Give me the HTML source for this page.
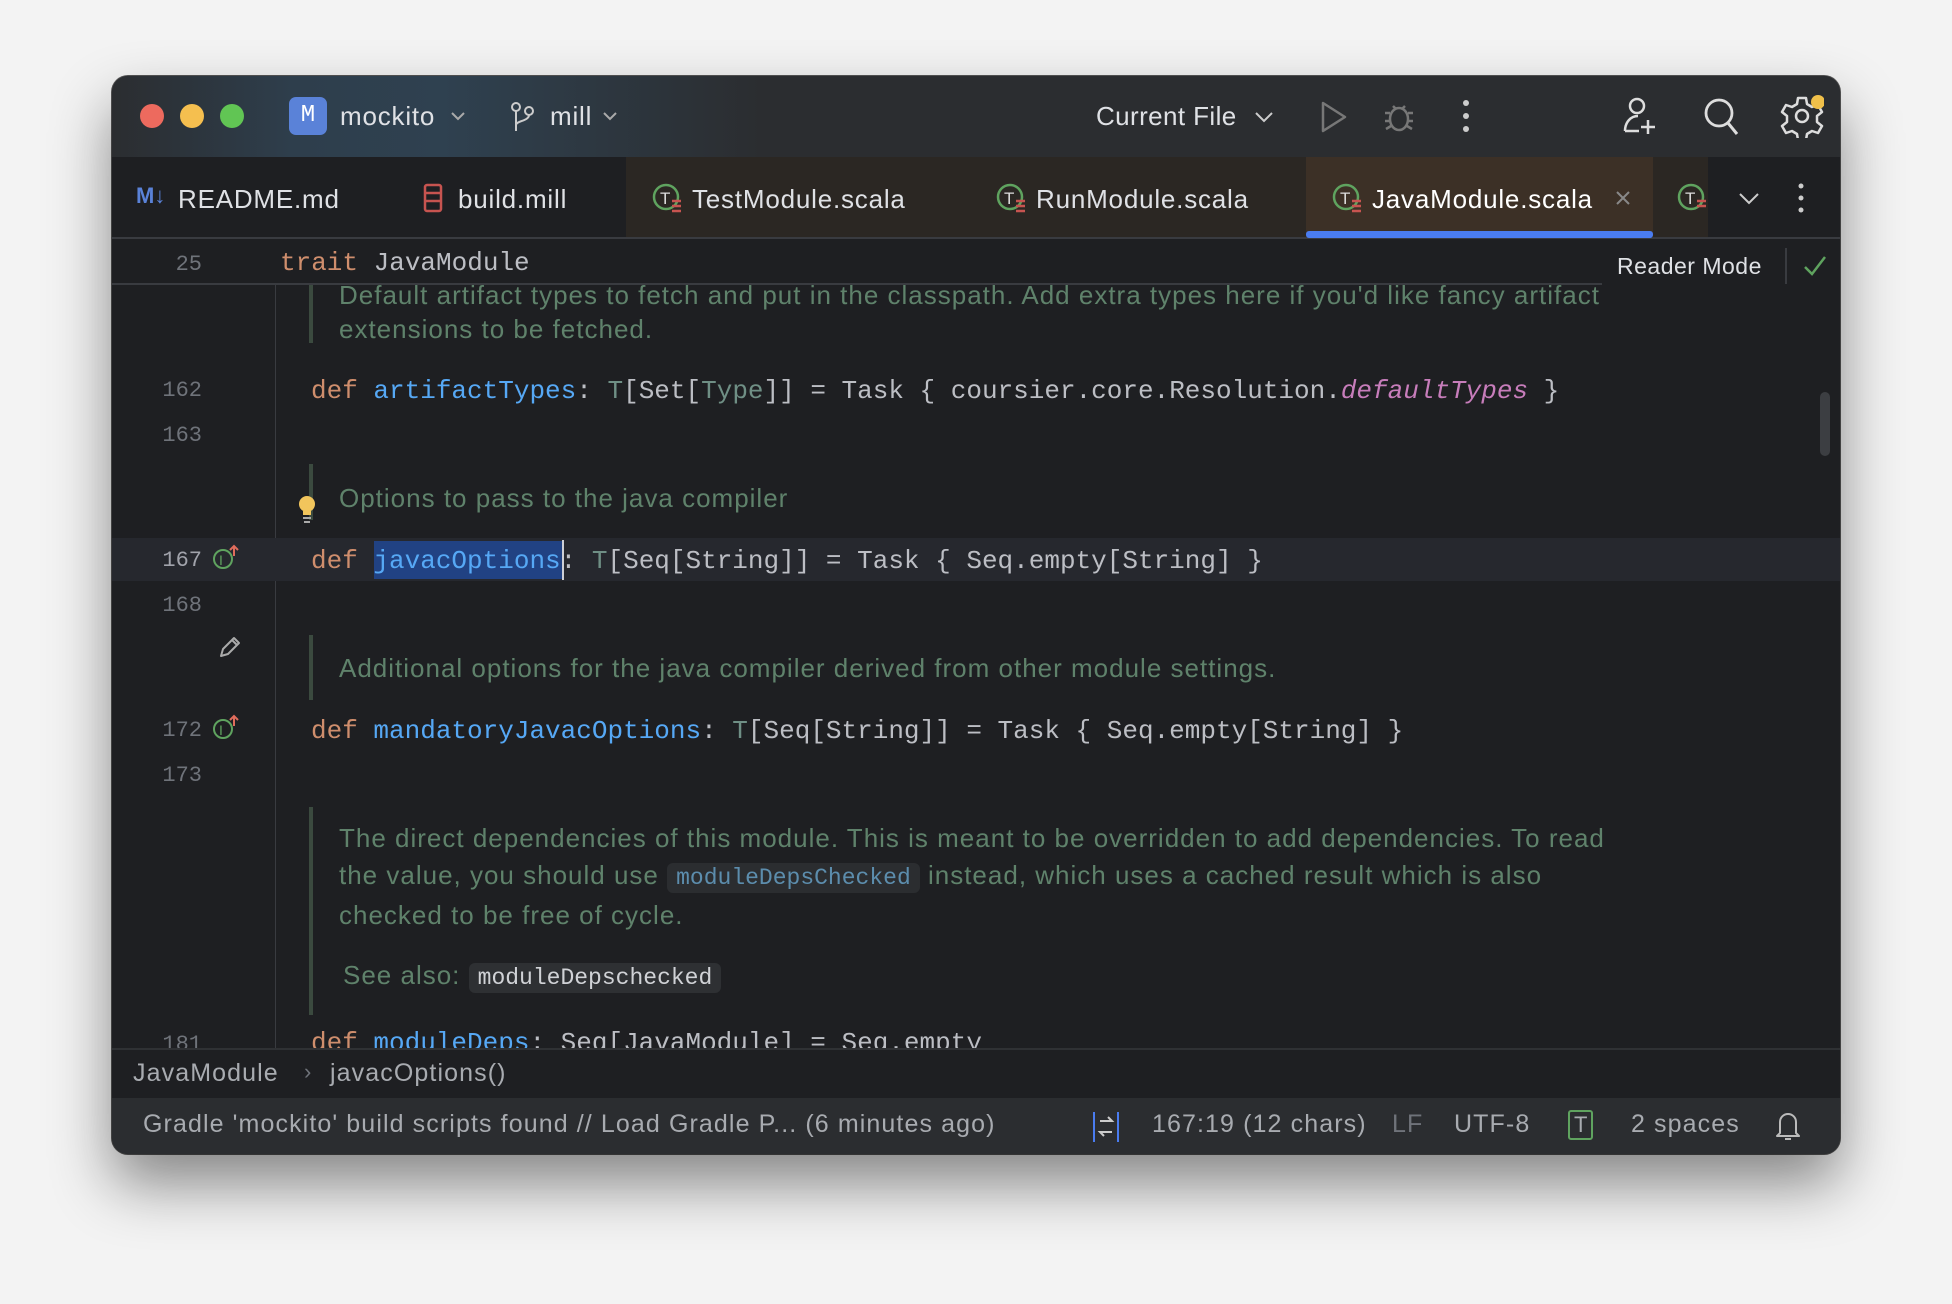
<!DOCTYPE html>
<html><head><meta charset="utf-8"><style>
*{margin:0;padding:0;box-sizing:border-box}
body{width:1952px;height:1304px;background:#f3f3f3;position:relative;overflow:hidden;font-family:"Liberation Sans",sans-serif}
.win{position:absolute;left:112px;top:76px;width:1728px;height:1078px;border-radius:16px;background:#1e1f22;overflow:hidden;box-shadow:0 30px 60px rgba(0,0,0,.45),0 0 0 1px #555;}
.a{position:absolute;white-space:pre}
.title{position:absolute;left:0;top:0;width:1728px;height:81px;background:linear-gradient(90deg,#2b2d30 0px,#2e3e4c 180px,#2f4150 330px,#2b2d30 650px,#2b2d30)}
.ui{color:#dfe1e5;font-size:26px;letter-spacing:0.8px}
.tabs{position:absolute;left:0;top:81px;width:1728px;height:82px;background:#1e1f22;border-bottom:2px solid #393b40}
.mono{font-family:"Liberation Mono",monospace;font-size:26px;color:#bcbec4}
.doc{font-size:26px;letter-spacing:1px;color:#5f826b}
.st{font-size:25px;letter-spacing:1.1px;color:#a8abb0}
.ln{font-family:"Liberation Mono",monospace;font-size:22px;color:#6f737a;text-align:right;width:60px}
.kw{color:#cf8e6d}.fn{color:#56a8f5}.ty{color:#6f8f85}.it{color:#c77dbb;font-style:italic}
.bar{position:absolute;left:197px;width:4px;background:#3b4a3f}
</style></head><body>
<div class="win">
 <div class="title">
  <div class="a" style="left:28px;top:28px;width:24px;height:24px;border-radius:50%;background:#ed6a5e"></div>
  <div class="a" style="left:68px;top:28px;width:24px;height:24px;border-radius:50%;background:#f5bf4f"></div>
  <div class="a" style="left:108px;top:28px;width:24px;height:24px;border-radius:50%;background:#61c554"></div>
  <div class="a" style="left:177px;top:21px;width:38px;height:38px;border-radius:7px;background:#5a82d8;color:#fff;font-size:24px;text-align:center;line-height:38px;font-family:'Liberation Mono',monospace">M</div>
  <div class="a ui" style="left:228px;top:25px">mockito</div>
  <svg class="a" style="left:338px;top:34px" width="16" height="12"><path d="M2 3l6 6 6-6" stroke="#aaa" stroke-width="2" fill="none"/></svg>
  <svg class="a" style="left:397px;top:25px" width="28" height="32"><circle cx="7" cy="6" r="4" stroke="#ccc" stroke-width="2" fill="none"/><circle cx="20" cy="10" r="4" stroke="#ccc" stroke-width="2" fill="none"/><path d="M7 10v20M20 14c0 6-13 6-13 10" stroke="#ccc" stroke-width="2" fill="none"/></svg>
  <div class="a ui" style="left:438px;top:25px">mill</div>
  <svg class="a" style="left:490px;top:34px" width="16" height="12"><path d="M2 3l6 6 6-6" stroke="#aaa" stroke-width="2" fill="none"/></svg>
  <div class="a ui" style="left:984px;top:25px;letter-spacing:0.4px">Current File</div>
  <svg class="a" style="left:1142px;top:34px" width="20" height="14"><path d="M2 3l8 8 8-8" stroke="#ccc" stroke-width="2" fill="none"/></svg>
  <svg class="a" style="left:1206px;top:24px" width="30" height="34"><path d="M5 3l22 14-22 14z" stroke="#777" stroke-width="2.5" fill="none" stroke-linejoin="round"/></svg>
  <svg class="a" style="left:1270px;top:24px" width="34" height="34"><ellipse cx="17" cy="19" rx="9" ry="11" stroke="#777" stroke-width="2.5" fill="none"/><path d="M3 13h5M26 13h5M3 21h5M26 21h5M4 29l5-3M30 29l-5-3M11 6l3 3M23 6l-3 3" stroke="#777" stroke-width="2.5"/></svg>
  <svg class="a" style="left:1350px;top:22px" width="8" height="36"><circle cx="4" cy="5" r="3" fill="#ccc"/><circle cx="4" cy="18" r="3" fill="#ccc"/><circle cx="4" cy="31" r="3" fill="#ccc"/></svg>
  <svg class="a" style="left:1510px;top:20px" width="40" height="42"><circle cx="15" cy="10" r="7" stroke="#ddd" stroke-width="2.5" fill="none"/><path d="M3 35c0-9 6-15 13-15M26 24v14M19 31h14M3 35h14" stroke="#ddd" stroke-width="2.5" fill="none"/></svg>
  <svg class="a" style="left:1590px;top:20px" width="40" height="42"><circle cx="17" cy="17" r="13" stroke="#ddd" stroke-width="2.8" fill="none"/><path d="M26 27l9 11" stroke="#ddd" stroke-width="3"/></svg>
  <svg class="a" style="left:1668px;top:18px" width="44" height="44"><path d="M18 4h8l1 6 5 3 6-2 4 7-5 4v6l5 4-4 7-6-2-5 3-1 6h-8l-1-6-5-3-6 2-4-7 5-4v-6l-5-4 4-7 6 2 5-3z" stroke="#ddd" stroke-width="2.5" fill="none" stroke-linejoin="round"/><circle cx="22" cy="22" r="6" stroke="#ddd" stroke-width="2.5" fill="none"/><circle cx="38" cy="8" r="7" fill="#f0c04a"/></svg>
 </div>
 <div class="tabs">
  <div class="a" style="left:514px;top:0;width:342px;height:80px;background:#2b2723"></div>
  <div class="a" style="left:856px;top:0;width:338px;height:80px;background:#2b2723"></div>
  <div class="a" style="left:1194px;top:0;width:347px;height:80px;background:#3c3026"></div>
  <div class="a" style="left:1194px;top:74px;width:347px;height:7px;background:#4a7cf0;border-radius:3px"></div>
  <div class="a" style="left:1541px;top:0;width:55px;height:80px;background:#2b2723"></div>
  <div class="a" style="left:24px;top:26px;color:#5a82d8;font-weight:bold;font-size:22px">M↓</div>
  <div class="a ui" style="left:66px;top:27px">README.md</div>
  <svg class="a" style="left:310px;top:26px" width="22" height="30"><rect x="3" y="2" width="16" height="26" rx="2" stroke="#c75450" stroke-width="2.5" fill="none"/><path d="M3 10h16M3 18h16" stroke="#c75450" stroke-width="2.5"/></svg>
  <div class="a ui" style="left:346px;top:27px">build.mill</div>
  <svg class="a" style="left:540px;top:25px" width="34" height="34"><circle cx="14" cy="15" r="12" stroke="#5fa35f" stroke-width="2.5" fill="none"/><text x="8" y="22" fill="#ddd" font-size="17" font-family="Liberation Sans">T</text><path d="M20 19h9M20 24h9M20 29h9" stroke="#c75450" stroke-width="2.5"/></svg>
  <div class="a ui" style="left:580px;top:27px">TestModule.scala</div>
  <svg class="a" style="left:884px;top:25px" width="34" height="34"><circle cx="14" cy="15" r="12" stroke="#5fa35f" stroke-width="2.5" fill="none"/><text x="8" y="22" fill="#ddd" font-size="17" font-family="Liberation Sans">T</text><path d="M20 19h9M20 24h9M20 29h9" stroke="#c75450" stroke-width="2.5"/></svg>
  <div class="a ui" style="left:924px;top:27px">RunModule.scala</div>
  <svg class="a" style="left:1220px;top:25px" width="34" height="34"><circle cx="14" cy="15" r="12" stroke="#5fa35f" stroke-width="2.5" fill="none"/><text x="8" y="22" fill="#ddd" font-size="17" font-family="Liberation Sans">T</text><path d="M20 19h9M20 24h9M20 29h9" stroke="#c75450" stroke-width="2.5"/></svg>
  <div class="a ui" style="left:1260px;top:27px;color:#fff">JavaModule.scala</div>
  <svg class="a" style="left:1502px;top:32px" width="18" height="18"><path d="M3 3l12 12M15 3L3 15" stroke="#888" stroke-width="2"/></svg>
  <svg class="a" style="left:1565px;top:25px" width="30" height="34"><circle cx="14" cy="15" r="12" stroke="#5fa35f" stroke-width="2.5" fill="none"/><text x="8" y="22" fill="#ddd" font-size="17" font-family="Liberation Sans">T</text><path d="M20 19h9M20 24h9" stroke="#c75450" stroke-width="2.5"/></svg>
  <svg class="a" style="left:1626px;top:34px" width="22" height="14"><path d="M2 3l9 9 9-9" stroke="#ccc" stroke-width="2" fill="none"/></svg>
  <svg class="a" style="left:1685px;top:24px" width="8" height="34"><circle cx="4" cy="5" r="2.5" fill="#ccc"/><circle cx="4" cy="17" r="2.5" fill="#ccc"/><circle cx="4" cy="29" r="2.5" fill="#ccc"/></svg>
 </div>
 <!-- editor -->
 <div class="a" style="left:163px;top:209px;width:1px;height:763px;background:#393b40"></div>
 <div class="bar" style="top:209px;height:58px"></div>
 <div class="a doc" style="left:227px;top:204px">Default artifact types to fetch and put in the classpath. Add extra types here if you'd like fancy artifact</div>
 <div class="a doc" style="left:227px;top:238px">extensions to be fetched.</div>
 <div class="a ln" style="left:30px;top:302px">162</div>
 <div class="a mono" style="left:199px;top:300px"><span class="kw">def</span> <span class="fn">artifactTypes</span>: <span class="ty">T</span>[Set[<span class="ty">Type</span>]] = Task { coursier.core.Resolution.<span class="it">defaultTypes</span> }</div>
 <div class="a ln" style="left:30px;top:347px">163</div>
 <div class="bar" style="top:388px;height:56px"></div>
 <div class="a doc" style="left:227px;top:407px">Options to pass to the java compiler</div>
 <svg class="a" style="left:184px;top:418px" width="22" height="30"><circle cx="11" cy="10" r="8" fill="#f2c55c"/><rect x="7" y="17" width="8" height="4" fill="#f2c55c"/><path d="M7 24h8M8 28h6" stroke="#aaa" stroke-width="2"/></svg>
 <div class="a" style="left:0;top:462px;width:1728px;height:43px;background:#26282e"></div>
 <div class="a ln" style="left:30px;top:472px;color:#a1a3ab">167</div>
 <svg class="a" style="left:100px;top:468px" width="28" height="28"><circle cx="11" cy="15" r="9" stroke="#5fa35f" stroke-width="2" fill="none"/><text x="7" y="21" fill="#5fa35f" font-size="14" font-family="Liberation Sans">I</text><path d="M22 12V2M18 6l4-4 4 4" stroke="#e06c5c" stroke-width="2" fill="none"/></svg>
 <div class="a" style="left:262px;top:465px;width:188px;height:38px;background:#214283"></div>
 <div class="a" style="left:450px;top:464px;width:2px;height:40px;background:#ced0d6"></div>
 <div class="a mono" style="left:199px;top:470px"><span class="kw">def</span> <span class="fn">javacOptions</span>: <span class="ty">T</span>[Seq[String]] = Task { Seq.empty[String] }</div>
 <div class="a ln" style="left:30px;top:517px">168</div>
 <svg class="a" style="left:105px;top:558px" width="26" height="26"><path d="M4 22l2-7L17 4l5 5-11 11z M15 6l5 5" stroke="#aaa" stroke-width="2" fill="none" stroke-linejoin="round"/></svg>
 <div class="bar" style="top:559px;height:65px"></div>
 <div class="a doc" style="left:227px;top:577px">Additional options for the java compiler derived from other module settings.</div>
 <div class="a ln" style="left:30px;top:642px">172</div>
 <svg class="a" style="left:100px;top:638px" width="28" height="28"><circle cx="11" cy="15" r="9" stroke="#5fa35f" stroke-width="2" fill="none"/><text x="7" y="21" fill="#5fa35f" font-size="14" font-family="Liberation Sans">I</text><path d="M22 12V2M18 6l4-4 4 4" stroke="#e06c5c" stroke-width="2" fill="none"/></svg>
 <div class="a mono" style="left:199px;top:640px"><span class="kw">def</span> <span class="fn">mandatoryJavacOptions</span>: <span class="ty">T</span>[Seq[String]] = Task { Seq.empty[String] }</div>
 <div class="a ln" style="left:30px;top:687px">173</div>
 <div class="bar" style="top:731px;height:208px"></div>
 <div class="a doc" style="left:227px;top:747px">The direct dependencies of this module. This is meant to be overridden to add dependencies. To read</div>
 <div class="a doc" style="left:227px;top:784px">the value, you should use <span style="display:inline-block;background:#2b2d30;border-radius:6px;padding:2px 9px;font-family:'Liberation Mono',monospace;font-size:23px;letter-spacing:0;color:#5c8dad">moduleDepsChecked</span> instead, which uses a cached result which is also</div>
 <div class="a doc" style="left:227px;top:824px">checked to be free of cycle.</div>
 <div class="a doc" style="left:231px;top:884px">See also: <span style="display:inline-block;background:#2e3033;border-radius:6px;padding:2px 9px;font-family:'Liberation Mono',monospace;font-size:23px;letter-spacing:0;color:#d0d2d6">moduleDepschecked</span></div>
 <div class="a ln" style="left:30px;top:956px">181</div>
 <div class="a mono" style="left:199px;top:952px"><span class="kw">def</span> <span class="fn">moduleDeps</span>: Seq[JavaModule] = Seq.empty</div>
 <!-- sticky -->
 <div class="a" style="left:0;top:163px;width:1728px;height:46px;background:#1e1f22;border-bottom:2px solid #393b40"></div>
 <div class="a ln" style="left:30px;top:176px">25</div>
 <div class="a mono" style="left:168px;top:172px"><span class="kw">trait</span> JavaModule</div>
 <div class="a" style="left:1490px;top:163px;width:238px;height:58px;background:#1e1f22"></div>
 <div class="a" style="left:1505px;top:177px;font-size:23px;letter-spacing:0.5px;color:#dfe1e5">Reader Mode</div>
 <div class="a" style="left:1673px;top:172px;width:2px;height:36px;background:#393b40"></div>
 <svg class="a" style="left:1690px;top:178px" width="26" height="24"><path d="M3 13l7 7L23 3" stroke="#5fa35f" stroke-width="2.5" fill="none"/></svg>
 <div class="a" style="left:1708px;top:316px;width:10px;height:64px;border-radius:5px;background:#3c3e42"></div>
 <!-- breadcrumb -->
 <div class="a" style="left:0;top:972px;width:1728px;height:50px;background:#1e1f22;border-top:2px solid #2f3134"></div>
 <div class="a st" style="left:21px;top:983px">JavaModule</div>
 <div class="a" style="left:192px;top:983px;font-size:22px;color:#6f737a">›</div>
 <div class="a st" style="left:218px;top:983px">javacOptions()</div>
 <!-- status -->
 <div class="a" style="left:0;top:1022px;width:1728px;height:56px;background:#2b2d30"></div>
 <div class="a st" style="left:31px;top:1034px">Gradle 'mockito' build scripts found // Load Gradle P... (6 minutes ago)</div>
 <svg class="a" style="left:980px;top:1034px" width="28" height="34"><path d="M2 2v30M26 2v30" stroke="#4a7cf0" stroke-width="2"/><path d="M8 11h12l-4-4M20 22H8l4 4" stroke="#ccc" stroke-width="2" fill="none"/></svg>
 <div class="a st" style="left:1040px;top:1034px">167:19 (12 chars)</div>
 <div class="a st" style="left:1280px;top:1034px;color:#6f737a">LF</div>
 <div class="a st" style="left:1342px;top:1034px">UTF-8</div>
 <div class="a" style="left:1456px;top:1034px;font-size:22px;color:#a8abb0;border:2px solid #5fa35f;border-radius:3px;padding:0 4px;line-height:26px">T</div>
 <div class="a st" style="left:1519px;top:1034px">2 spaces</div>
 <svg class="a" style="left:1663px;top:1032px" width="26" height="34"><path d="M5 25V14a8 8 0 0 1 16 0v11l3 3H2z M10 31h6" stroke="#bbb" stroke-width="2" fill="none" stroke-linejoin="round"/></svg>
</div>
</body></html>
